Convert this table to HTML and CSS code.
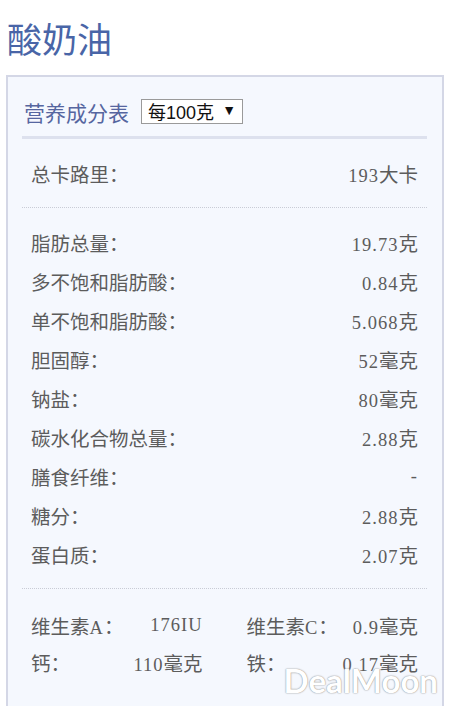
FILE: index.html
```html
<!DOCTYPE html>
<html lang="zh">
<head>
<meta charset="utf-8">
<title>酸奶油</title>
<link rel="stylesheet" href="styles.css">
</head>
<body>
<div class="page">
  <h1 class="title">酸奶油</h1>
  <div class="panel">
    <div class="panel-head">
      <span class="panel-title">营养成分表</span>
      <span class="unit-select"><span class="unit-text">每100克</span><span class="unit-arrow">▼</span></span>
    </div>
    <div class="section">
      <div class="row"><span>总卡路里：</span><span><span class="num">193</span>大卡</span></div>
    </div>
    <div class="section">
      <div class="row"><span>脂肪总量：</span><span><span class="num">19.73</span>克</span></div>
      <div class="row"><span>多不饱和脂肪酸：</span><span><span class="num">0.84</span>克</span></div>
      <div class="row"><span>单不饱和脂肪酸：</span><span><span class="num">5.068</span>克</span></div>
      <div class="row"><span>胆固醇：</span><span><span class="num">52</span>毫克</span></div>
      <div class="row"><span>钠盐：</span><span><span class="num">80</span>毫克</span></div>
      <div class="row"><span>碳水化合物总量：</span><span><span class="num">2.88</span>克</span></div>
      <div class="row"><span>膳食纤维：</span><span class="num">-</span></div>
      <div class="row"><span>糖分：</span><span><span class="num">2.88</span>克</span></div>
      <div class="row"><span>蛋白质：</span><span><span class="num">2.07</span>克</span></div>
    </div>
    <div class="section vitamins">
      <div class="vrow"><span>维生素<span class="num">A</span>：</span><span class="num">176IU</span></div>
      <div class="vrow"><span>维生素<span class="num">C</span>：</span><span><span class="num">0.9</span>毫克</span></div>
      <div class="vrow"><span>钙：</span><span><span class="num">110</span>毫克</span></div>
      <div class="vrow"><span>铁：</span><span><span class="num">0.17</span>毫克</span></div>
    </div>
    <div class="watermark">DealMoon</div>
  </div>
</div>
</body>
</html>
```
FILE: styles.css
```css
html, body {
  margin: 0;
  padding: 0;
  background: #ffffff;
}
.page {
  padding: 0 9px 0 6px;
  font-family: "Noto Sans CJK SC", sans-serif;
}
.title {
  margin: 0 0 17px;
  padding: 17px 0 0 1px;
  height: 58px;
  box-sizing: border-box;
  font-size: 35px;
  line-height: 41px;
  font-weight: 400;
  color: #4965a7;
}
.panel {
  position: relative;
  border: 2px solid #d4d7e6;
  border-bottom: none;
  background: #f5f8fe;
  padding: 0 15px 40px 14px;
}
.panel-head {
  display: flex;
  align-items: center;
  gap: 12px;
  height: 62px;
  padding: 10px 0 0 2px;
  box-sizing: border-box;
  border-bottom: 3px solid #dde1ee;
}
.panel-title {
  font-family: "Noto Sans CJK SC", sans-serif;
  font-size: 21px;
  color: #5666a0;
  line-height: 26px;
}
.unit-select {
  display: inline-flex;
  align-items: center;
  justify-content: space-between;
  width: 102px;
  height: 25px;
  box-sizing: border-box;
  border: 1px solid #9a9a9a;
  background: #ffffff;
  padding: 0 6px 0 6px;
  font-family: "Liberation Sans", "Noto Sans CJK SC", sans-serif;
  font-size: 18px;
  color: #111;
}
.unit-text {
  line-height: 22px;
  margin-top: 2px;
}
.unit-arrow {
  font-size: 14px;
  line-height: 14px;
  margin-top: -4px;
}
.section {
  padding: 15px 0 14px;
  border-bottom: 1px dotted #c9ccd6;
}
.section:first-of-type {
  padding-top: 16px;
}
.row {
  display: flex;
  justify-content: space-between;
  align-items: center;
  height: 39px;
  padding: 0 9px;
  font-family: "Noto Sans CJK SC", sans-serif;
  font-size: 19.5px;
  color: #5c5c5c;
}
.num {
  font-family: "Liberation Serif", serif;
  font-size: 18.5px;
  letter-spacing: 1px;
}
.vitamins {
  display: grid;
  grid-template-columns: 1fr 1fr;
  column-gap: 44px;
  padding: 18px 9px 0;
  border-bottom: none;
}
.vrow {
  display: flex;
  justify-content: space-between;
  align-items: center;
  height: 37px;
  font-family: "Noto Sans CJK SC", sans-serif;
  font-size: 19.5px;
  color: #5c5c5c;
}
.watermark {
  position: absolute;
  right: 4px;
  bottom: 21px;
  font-family: "Lato", "Open Sans", sans-serif;
  font-size: 33px;
  font-weight: 700;
  color: #ffffff;
  text-shadow: 0 0 1px #8a8a8a, 0 0 2px #b0b0b0;
}
```
